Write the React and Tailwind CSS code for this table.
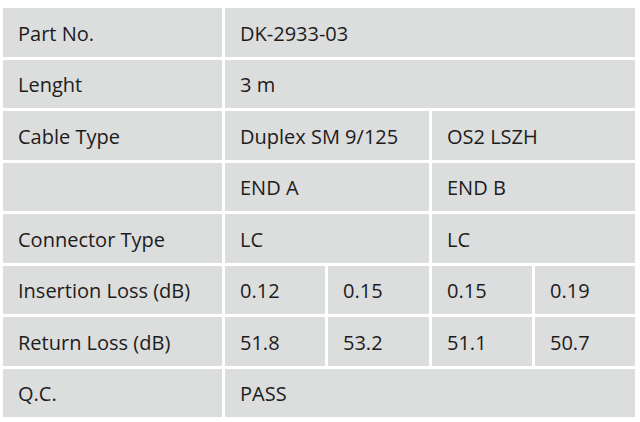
const rows = [
  [['Part No.', 1], ['DK-2933-03', 4]],
  [['Lenght', 1], ['3 m', 4]],
  [['Cable Type', 1], ['Duplex SM 9/125', 2], ['OS2 LSZH', 2]],
  [['', 1], ['END A', 2], ['END B', 2]],
  [['Connector Type', 1], ['LC', 2], ['LC', 2]],
  [['Insertion Loss (dB)', 1], ['0.12', 1], ['0.15', 1], ['0.15', 1], ['0.19', 1]],
  [['Return Loss (dB)', 1], ['51.8', 1], ['53.2', 1], ['51.1', 1], ['50.7', 1]],
  [['Q.C.', 1], ['PASS', 4]],
];

const spanClass = {
  1: 'col-span-1',
  2: 'col-span-2',
  4: 'col-span-4',
};

export default function App() {
  return (
    <div className="w-[640px] h-[422px] bg-white pt-[8px] pl-[3px]" style={{ fontFamily: '"Open Sans", sans-serif' }}>
      {/* Spec table */}
      <div className="grid grid-cols-[219px_100px_101px_100px_100px] grid-rows-8 h-[409px] gap-x-[3px] gap-y-[3px]">
        {rows.map((row, r) =>
          row.map(([text, span], c) => (
            <div
              key={`${r}-${c}`}
              className={`${spanClass[span]} bg-[#dcdddd] flex items-center pl-[15px] pt-[3px] text-[20px] text-[#1c1c1c] leading-none`}
            >
              {text}
            </div>
          ))
        )}
      </div>
    </div>
  );
}
